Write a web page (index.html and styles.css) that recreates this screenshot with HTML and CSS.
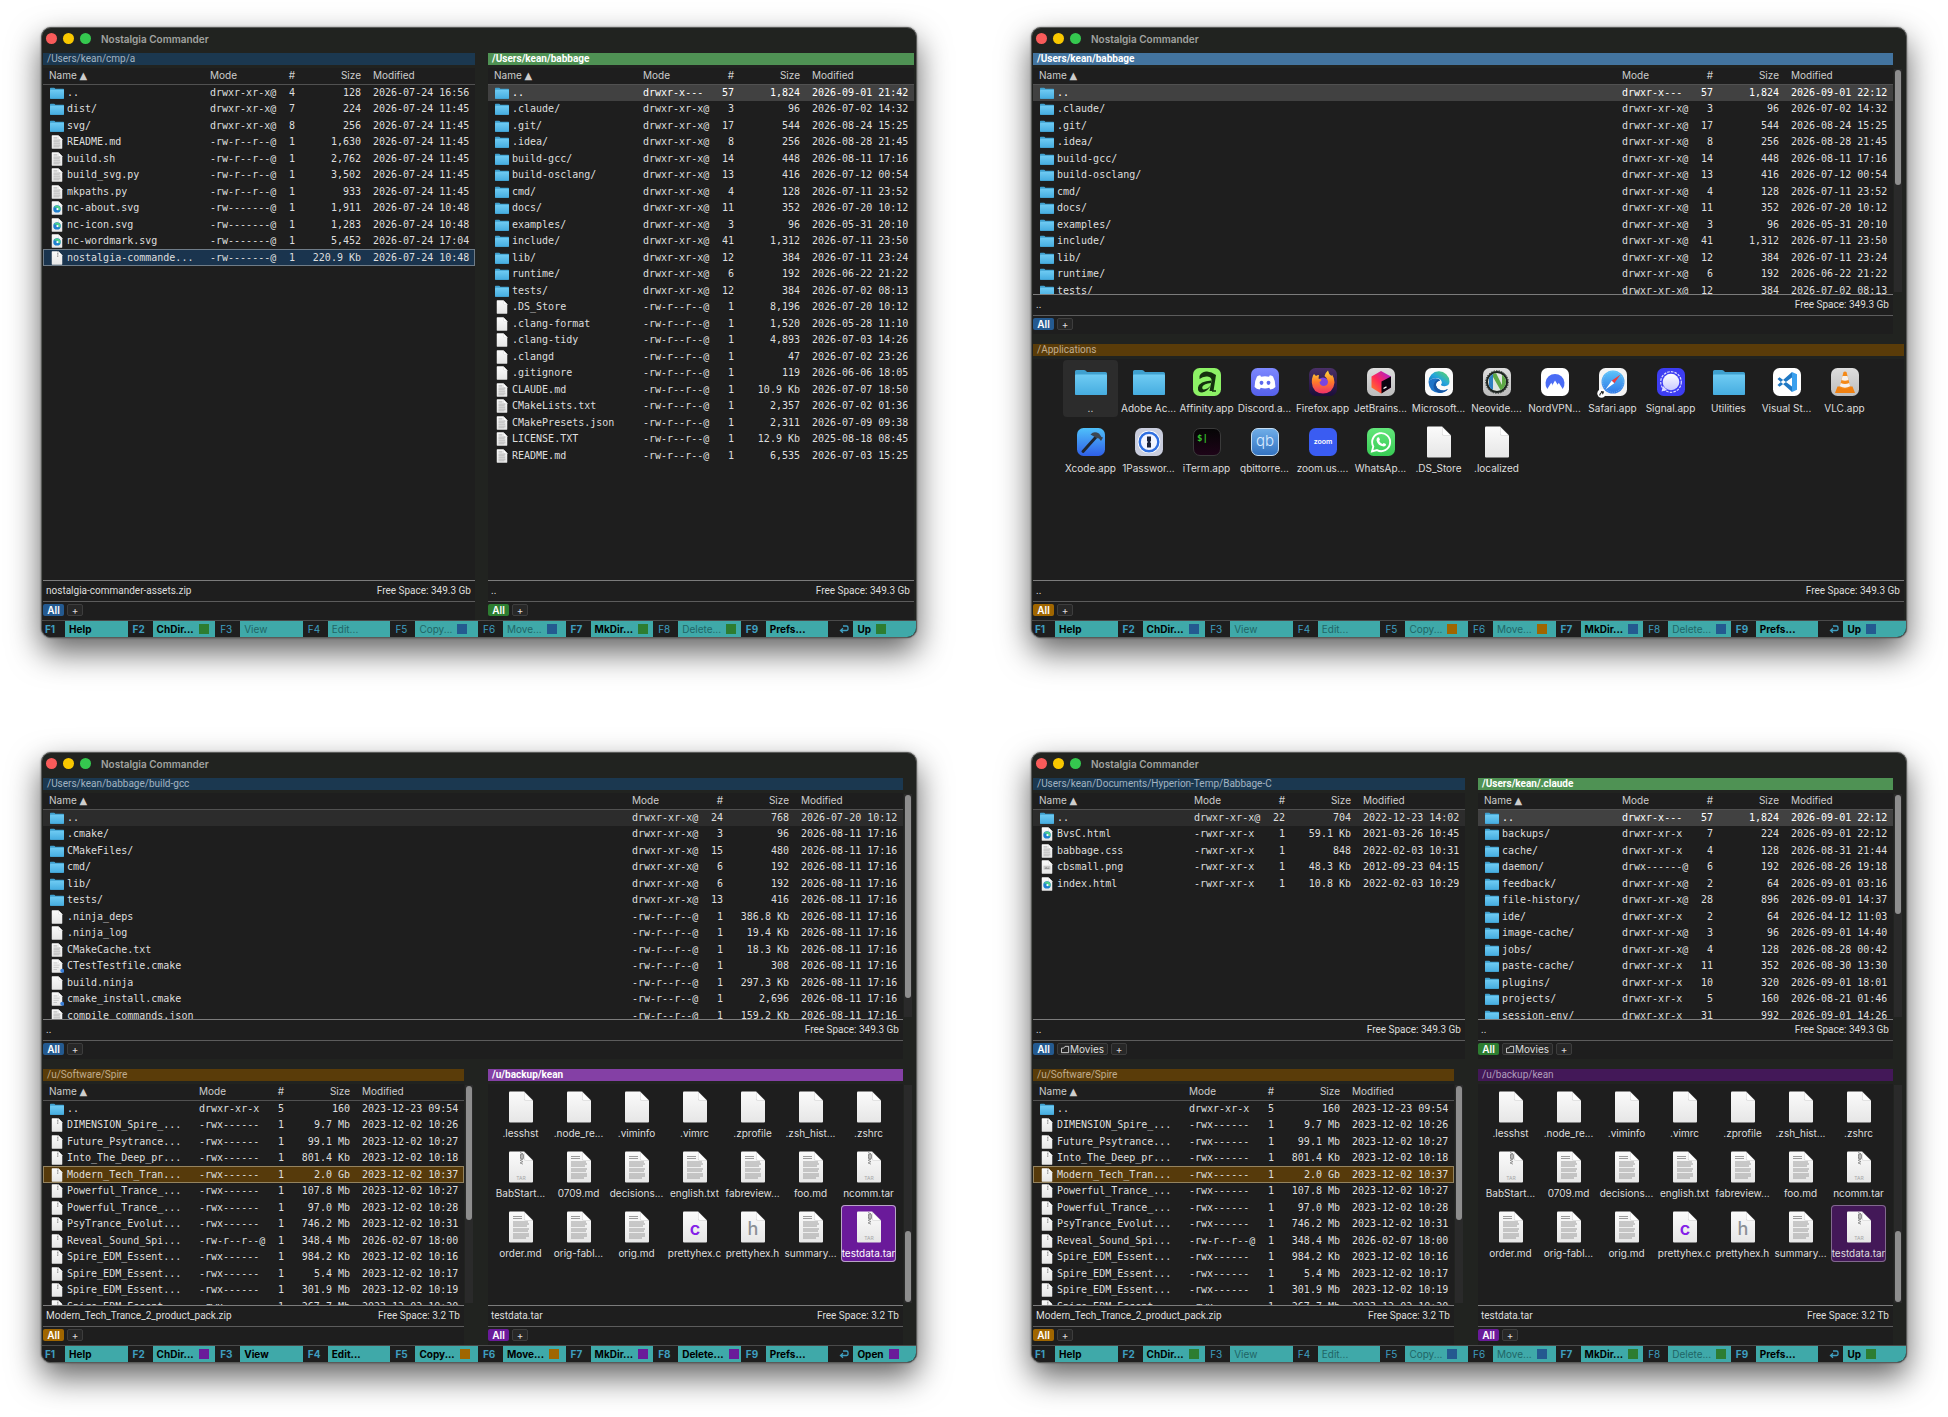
FILE: index.html
```html
<!DOCTYPE html>
<html lang="en">
<head>
<meta charset="utf-8">
<title>Nostalgia Commander</title>
<link rel="stylesheet" href="styles.css">
</head>
<body>
<svg class="sprite" width="0" height="0" aria-hidden="true">
<defs>
<linearGradient id="g-dir" x1="0" y1="0" x2="0" y2="1"><stop offset="0" stop-color="#6fcbf3"/><stop offset="1" stop-color="#46ade0"/></linearGradient>
<linearGradient id="g-doc" x1="0" y1="0" x2="0" y2="1"><stop offset="0" stop-color="#fbfbfb"/><stop offset="1" stop-color="#e6e6e6"/></linearGradient>
<linearGradient id="g-edge" x1="0" y1="1" x2="1" y2="0"><stop offset="0" stop-color="#1463b5"/><stop offset=".5" stop-color="#25a5dc"/><stop offset="1" stop-color="#5fdc55"/></linearGradient>
<linearGradient id="g-disc" x1="0" y1="0" x2="0" y2="1"><stop offset="0" stop-color="#7d88ff"/><stop offset="1" stop-color="#5560ea"/></linearGradient>
<linearGradient id="g-fire" x1="0" y1="0" x2="0" y2="1"><stop offset="0" stop-color="#ffd93a"/><stop offset=".5" stop-color="#ff7a2a"/><stop offset="1" stop-color="#f0306a"/></linearGradient>
<linearGradient id="g-firebg" x1="0" y1="0" x2="0" y2="1"><stop offset="0" stop-color="#4a3068"/><stop offset="1" stop-color="#1b0e3a"/></linearGradient>
<linearGradient id="g-jet" x1="0" y1="1" x2="1" y2="0"><stop offset="0" stop-color="#ff8a1f"/><stop offset=".45" stop-color="#ff2857"/><stop offset="1" stop-color="#a01ee0"/></linearGradient>
<linearGradient id="g-gray" x1="0" y1="0" x2="0" y2="1"><stop offset="0" stop-color="#dedede"/><stop offset="1" stop-color="#bcbcbc"/></linearGradient>
<linearGradient id="g-saf" x1="0" y1="0" x2="0" y2="1"><stop offset="0" stop-color="#5cc4fa"/><stop offset="1" stop-color="#2f78e6"/></linearGradient>
<linearGradient id="g-xc" x1="0" y1="0" x2="0" y2="1"><stop offset="0" stop-color="#4fc0fa"/><stop offset="1" stop-color="#2f5fe8"/></linearGradient>
<linearGradient id="g-qb" x1="0" y1="0" x2="0" y2="1"><stop offset="0" stop-color="#70aee8"/><stop offset="1" stop-color="#3272c0"/></linearGradient>
<linearGradient id="g-wa" x1="0" y1="0" x2="0" y2="1"><stop offset="0" stop-color="#62e67a"/><stop offset="1" stop-color="#38cc55"/></linearGradient>
<linearGradient id="g-term" x1="0" y1="0" x2="0" y2="1"><stop offset="0" stop-color="#050505"/><stop offset="1" stop-color="#1e0418"/></linearGradient>
<linearGradient id="g-sig" x1="0" y1="0" x2="0" y2="1"><stop offset="0" stop-color="#ffffff"/><stop offset="1" stop-color="#c8caff"/></linearGradient>
<clipPath id="c-neo"><circle cx="16" cy="16" r="9"/></clipPath>
</defs>
<symbol id="dir" viewBox="0 0 32 32"><path d="M0 5.5Q0 4 1.5 4H9q1 0 1.800.8L12 6H30.500Q32 6 32 7.500V27.500Q32 29 30.500 29H1.500Q0 29 0 27.500Z" fill="#3fa0cf"/><path d="M0 9.500Q0 8.500 1 8.500H31Q32 8.500 32 9.500V27.500Q32 29 30.500 29H1.500Q0 29 0 27.500Z" fill="url(#g-dir)"/></symbol>
<symbol id="doc" viewBox="0 0 32 32"><path d="M4 1.500Q4 .5 5 .5H19L28 9.500V30.500Q28 31.500 27 31.500H5Q4 31.500 4 30.500Z" fill="url(#g-doc)"/><path d="M19 .5 28 9.500H20.500Q19 9.500 19 8Z" fill="#cfcfcf"/><path d="M19.500 1.500 27 9H21Q19.500 9 19.500 7.500Z" fill="#fff"/></symbol>
<symbol id="txt" viewBox="0 0 32 32"><use href="#doc"/><path d="M8 5.500h9M8 7.500h9M8 11h15M8 13h16M8 15h14M8 18h16M8 20h15M8 23h16M8 25h16M8 27h13" stroke="#9c9c9c" stroke-width="1"/></symbol>
<symbol id="web" viewBox="0 0 32 32"><use href="#doc"/><circle cx="16" cy="18" r="8.500" fill="#1f7fd0"/><path d="M9 14a8.500 8.500 0 0 1 15.500 4q0 3-4 3-3 0-2-2 0-4-5-4-3 0-4.500-1Z" fill="#4fd08a"/><circle cx="17" cy="18.500" r="2.600" fill="#fff"/></symbol>
<symbol id="zip" viewBox="0 0 32 32"><use href="#doc"/><path d="M17.500 1v12" stroke="#8c8c8c" stroke-width="3" stroke-dasharray="2 1.500"/></symbol>
<symbol id="cmk" viewBox="0 0 32 32"><use href="#doc"/><path d="M8 9h9M8 14h14M8 19h12M8 24h8" stroke="#c4c4c4" stroke-width="2"/><circle cx="28" cy="27" r="4.500" fill="#3a7fd8"/></symbol>
<symbol id="png" viewBox="0 0 32 32"><use href="#doc"/><path d="M8 13h16v9H8Z" fill="#c8c8c8"/><path d="M10 20l4-4 3 3 2-2 3 3Z" fill="#8a8a8a"/></symbol>
<symbol id="tar" viewBox="0 0 32 32"><use href="#doc"/><path d="M15 1.500l3 1.300-3 1.300 3 1.300-3 1.300 3 1.300-3 1.300 3 1.300-3 1.300 3 1.300" fill="none" stroke="#8f8f8f" stroke-width=".9"/><rect x="15.500" y="3" width="3" height="5" rx="1" fill="#b5b5b5" stroke="#777" stroke-width=".7"/></symbol>
<symbol id="affinity" viewBox="0 0 32 32"><rect x="2" y="2" width="28" height="28" rx="6.500" fill="#8df266"/><path d="M8.500 10Q10 6 15 5.500T25 9L22.500 25H18.500L20.500 15Q21 11 16.500 10.500 12 10 8.500 13Z" fill="#14300f"/><path d="M20.500 14.500Q8.500 15 7 21.500 6.500 26.500 11 26.500 16.500 26 20 19Q17 23 13 23.500 10.500 23 11.500 20.500 13 17.500 20 17Z" fill="#14300f"/><path d="M21 25H25" stroke="#14300f" stroke-width="1.500"/></symbol>
<symbol id="discord" viewBox="0 0 32 32"><rect x="2" y="2" width="28" height="28" rx="6.500" fill="url(#g-disc)"/><path d="M11.200 9.300Q9 9.600 8 10.600 5.500 15 5.600 21 7.500 23.300 10.600 23.600L11.800 21.800Q16 23 20.200 21.800L21.400 23.600Q24.500 23.300 26.400 21 26.500 15 24 10.600 23 9.600 20.800 9.300L20 10.700Q16 10 12 10.700Z" fill="#fff"/><ellipse cx="12.500" cy="16.800" rx="1.900" ry="2.100" fill="#5c68ee"/><ellipse cx="19.500" cy="16.800" rx="1.900" ry="2.100" fill="#5c68ee"/></symbol>
<symbol id="firefox" viewBox="0 0 32 32"><rect x="2" y="2" width="28" height="28" rx="6.500" fill="url(#g-firebg)"/><circle cx="16" cy="17" r="5.500" fill="#7a45e0"/><path d="M6 9.500Q6.500 8.500 7 8L9 10Q10 9 12 9L11.500 12.500 14.500 13.500Q14.500 15 12.500 16 13 20 17 20 21 19.500 21 15.500 20.500 12 17.500 10 18.500 6.500 21 4.500 21.500 8 24.500 10L25 8.500Q27.500 12 27.500 16.500 26.500 27 16 27.500 5.500 27 4.800 16.500 4.800 12 6 9.500Z" fill="url(#g-fire)"/></symbol>
<symbol id="jetbrains" viewBox="0 0 32 32"><rect x="2" y="2" width="28" height="28" rx="6.500" fill="url(#g-gray)"/><path d="M16 5 26 10.500V21.500L16 27.500 6.500 21.500V10.500Z" fill="url(#g-jet)"/><path d="M16.500 15.500 26 10.500V21.500L16.500 27.500Z" fill="#0c0410"/><path d="M18.500 22.500l3-1.600" stroke="#fff" stroke-width="1.400"/></symbol>
<symbol id="edge" viewBox="0 0 32 32"><rect x="2" y="2" width="28" height="28" rx="6.500" fill="#fafafa"/><path d="M5.500 16A10.500 10.500 0 0 1 26.500 15.500Q26.500 20 21.500 20.200 18 20.200 18 18.500 19 17.500 18.800 16 18 12.500 13.500 12 8 12 5.500 16Z" fill="url(#g-edge)"/><path d="M5.500 16Q8 12.200 12.500 12.300 16.500 12.600 17 14.500 12.500 15.500 13 19.500 14.500 24.500 21 24.500L25 23Q22 26.800 16 27 6 26 5.500 16Z" fill="#1e74c8"/><path d="M13 19.500Q14.500 24.500 21 24.500L25 23Q22 26.800 17 26.900 10.500 25.500 10.500 19.500 11 15.500 15 13.500 17 14 17 14.500 12.500 15.500 13 19.500Z" fill="#1556a4"/></symbol>
<symbol id="neovide" viewBox="0 0 32 32"><rect x="2" y="2" width="28" height="28" rx="6.500" fill="url(#g-gray)"/><circle cx="16" cy="16" r="10" fill="#dfe5e0" stroke="#1d2420" stroke-width="2"/><circle cx="16" cy="16" r="11.300" fill="none" stroke="#1d2420" stroke-dasharray="1.300 1.300"/><g clip-path="url(#c-neo)"><path d="M8 9.500 12 6V26L8 24Z" fill="#2f7fc0"/><path d="M12 6 15 7 21 19V7L25 9V25H20L12 11Z" fill="#5da845"/></g></symbol>
<symbol id="nord" viewBox="0 0 32 32"><rect x="2" y="2" width="28" height="28" rx="6.500" fill="#fff"/><path d="M8.300 23A9.500 9.500 0 1 1 23.700 23L19.800 16.800 18.700 18.600 19 19.200 16 14.500 13 19.800 13.300 18.500 12.200 16.800Z" fill="#4a6cf5"/></symbol>
<symbol id="safari" viewBox="0 0 32 32"><rect x="2" y="2" width="28" height="28" rx="6.500" fill="#f4f4f4"/><circle cx="16" cy="16" r="11.500" fill="url(#g-saf)"/><circle cx="16" cy="16" r="10.300" fill="none" stroke="#a8d4fa" stroke-width="1" stroke-dasharray=".5 1.500"/><path d="M23.500 8.500 14.700 14.700 17.300 17.300Z" fill="#f03b3b"/><path d="M8.500 23.500 14.700 14.700 17.300 17.300Z" fill="#fff"/><circle cx="4.500" cy="27.500" r="4.200" fill="#fff"/><path d="M2.800 29.500Q2.800 26.500 6 26.200M4 25.500 6.400 26 5.500 28.300" fill="none" stroke="#222" stroke-width="1.100"/></symbol>
<symbol id="signal" viewBox="0 0 32 32"><rect x="2" y="2" width="28" height="28" rx="6.500" fill="#3d3df2"/><circle cx="16" cy="16" r="10.300" fill="none" stroke="#dcdcff" stroke-width="1.200" stroke-dasharray="2.600 1.100"/><circle cx="16" cy="16" r="8.300" fill="url(#g-sig)"/><path d="M6.500 25.500 8 20 12 24Z" fill="#dcdcff"/></symbol>
<symbol id="vscode" viewBox="0 0 32 32"><rect x="2" y="2" width="28" height="28" rx="6.500" fill="#fff"/><path d="M21 6 26 8.300V23.700L21 26Z" fill="#3aa0ee"/><path d="M21 6 6.500 19 8.500 20.800 21 11.500ZM21 26 6.500 13 8.500 11.200 21 20.500Z" fill="#1f78c4"/></symbol>
<symbol id="vlc" viewBox="0 0 32 32"><rect x="2" y="2" width="28" height="28" rx="6.500" fill="url(#g-gray)"/><path d="M8.500 20.500H23.500L26 27H6Z" fill="#f08010"/><path d="M14.500 6Q16 4.800 17.500 6L21.500 21.500Q16 24.500 10.500 21.500Z" fill="#f58a18"/><path d="M13.500 10H18.500L19.500 14Q16 15.500 12.500 14ZM11.700 17Q16 19 20.300 17L21.200 20.300Q16 23 10.800 20.300Z" fill="#f6f2ee"/></symbol>
<symbol id="xcode" viewBox="0 0 32 32"><rect x="2" y="2" width="28" height="28" rx="6.500" fill="url(#g-xc)"/><path d="M21 11 8 25.500" stroke="#1f2630" stroke-width="3" stroke-linecap="round"/><path d="M15.500 8.500Q19 4.500 24 7.500L26.500 11 28 11.500 26 15 24 12.500 21.500 12Z" fill="#3c4652"/></symbol>
<symbol id="onepw" viewBox="0 0 32 32"><rect x="2" y="2" width="28" height="28" rx="6.500" fill="#c9cddd"/><circle cx="16" cy="16" r="11.300" fill="#fff"/><circle cx="16" cy="16" r="9.300" fill="#f2f5ff" stroke="#2f6fe0" stroke-width="2.400"/><path d="M14 10.500H18V15L17 16 18 17V21.500H14V17L15 16 14 15Z" fill="#1a2238"/></symbol>
<symbol id="whatsapp" viewBox="0 0 32 32"><rect x="2" y="2" width="28" height="28" rx="6.500" fill="url(#g-wa)"/><path d="M7 25.500 8.300 20.500A9 9 0 1 1 12 24.100Z" fill="none" stroke="#fff" stroke-width="1.900"/><path d="M12.500 11.500 14 11.300 15 13.700 14.200 15Q15.500 17.300 17.600 18L18.700 16.900 21 18Q21 20.500 18.500 20.500 13 19.800 11.500 14.500 11.400 12.500 12.500 11.500Z" fill="#fff"/></symbol>
<symbol id="ret" viewBox="0 0 10 10"><path d="M4 2H7.500Q9 2 9 3.500V5Q9 6.500 7.500 6.500H2M4 4.300 1.500 6.500 4 8.700" fill="none" stroke="currentColor" stroke-width="1.300"/></symbol>
<symbol id="tabdir" viewBox="0 0 10 10"><path d="M.5 8.500V3.500H3L4.500 1.500H8.500V8.500Z" fill="none" stroke="currentColor"/></symbol>
</svg>

<main class="desk">

<section class="window" aria-label="Dual pane window">
<header class="titlebar"><button class="light close" aria-label="Close"></button><button class="light mini" aria-label="Minimize"></button><button class="light full" aria-label="Zoom"></button><h1>Nostalgia Commander</h1></header>
<div class="panes one-row">
<article class="pane blue">
<h2 class="path">/Users/kean/cmp/a</h2>
<div class="list"><table class="n1"><colgroup><col><col class="c-mode"><col class="c-links"><col class="c-size"><col class="c-date"></colgroup>
<thead><tr><th>Name <i>▲</i><th>Mode<th>#<th>Size<th>Modified</thead><tbody>
<tr><td><svg><use href="#dir"/></svg>..<td>drwxr-xr-x@<td>4<td>128<td>2026-07-24 16:56
<tr><td><svg><use href="#dir"/></svg>dist/<td>drwxr-xr-x@<td>7<td>224<td>2026-07-24 11:45
<tr><td><svg><use href="#dir"/></svg>svg/<td>drwxr-xr-x@<td>8<td>256<td>2026-07-24 11:45
<tr><td><svg><use href="#txt"/></svg>README.md<td>-rw-r--r--@<td>1<td>1,630<td>2026-07-24 11:45
<tr><td><svg><use href="#txt"/></svg>build.sh<td>-rw-r--r--@<td>1<td>2,762<td>2026-07-24 11:45
<tr><td><svg><use href="#txt"/></svg>build_svg.py<td>-rw-r--r--@<td>1<td>3,502<td>2026-07-24 11:45
<tr><td><svg><use href="#txt"/></svg>mkpaths.py<td>-rw-r--r--@<td>1<td>933<td>2026-07-24 11:45
<tr><td><svg><use href="#web"/></svg>nc-about.svg<td>-rw-------@<td>1<td>1,911<td>2026-07-24 10:48
<tr><td><svg><use href="#web"/></svg>nc-icon.svg<td>-rw-------@<td>1<td>1,283<td>2026-07-24 10:48
<tr><td><svg><use href="#web"/></svg>nc-wordmark.svg<td>-rw-------@<td>1<td>5,452<td>2026-07-24 17:04
<tr class="sel"><td><svg><use href="#zip"/></svg>nostalgia-commande...<td>-rw-------@<td>1<td>220.9 Kb<td>2026-07-24 10:48
</tbody></table></div>
<div class="status"><span>nostalgia-commander-assets.zip</span><span>Free Space: 349.3 Gb</span></div>
<nav class="tabs"><button class="on">All</button><button>+</button></nav>
</article>
<article class="pane green active">
<h2 class="path">/Users/kean/babbage</h2>
<div class="list"><table><colgroup><col><col class="c-mode"><col class="c-links"><col class="c-size"><col class="c-date"></colgroup>
<thead><tr><th>Name <i>▲</i><th>Mode<th>#<th>Size<th>Modified</thead><tbody>
<tr class="cur"><td><svg><use href="#dir"/></svg>..<td>drwxr-x---<td>57<td>1,824<td>2026-09-01 21:42
<tr><td><svg><use href="#dir"/></svg>.claude/<td>drwxr-xr-x@<td>3<td>96<td>2026-07-02 14:32
<tr><td><svg><use href="#dir"/></svg>.git/<td>drwxr-xr-x@<td>17<td>544<td>2026-08-24 15:25
<tr><td><svg><use href="#dir"/></svg>.idea/<td>drwxr-xr-x@<td>8<td>256<td>2026-08-28 21:45
<tr><td><svg><use href="#dir"/></svg>build-gcc/<td>drwxr-xr-x@<td>14<td>448<td>2026-08-11 17:16
<tr><td><svg><use href="#dir"/></svg>build-osclang/<td>drwxr-xr-x@<td>13<td>416<td>2026-07-12 00:54
<tr><td><svg><use href="#dir"/></svg>cmd/<td>drwxr-xr-x@<td>4<td>128<td>2026-07-11 23:52
<tr><td><svg><use href="#dir"/></svg>docs/<td>drwxr-xr-x@<td>11<td>352<td>2026-07-20 10:12
<tr><td><svg><use href="#dir"/></svg>examples/<td>drwxr-xr-x@<td>3<td>96<td>2026-05-31 20:10
<tr><td><svg><use href="#dir"/></svg>include/<td>drwxr-xr-x@<td>41<td>1,312<td>2026-07-11 23:50
<tr><td><svg><use href="#dir"/></svg>lib/<td>drwxr-xr-x@<td>12<td>384<td>2026-07-11 23:24
<tr><td><svg><use href="#dir"/></svg>runtime/<td>drwxr-xr-x@<td>6<td>192<td>2026-06-22 21:22
<tr><td><svg><use href="#dir"/></svg>tests/<td>drwxr-xr-x@<td>12<td>384<td>2026-07-02 08:13
<tr><td><svg><use href="#doc"/></svg>.DS_Store<td>-rw-r--r--@<td>1<td>8,196<td>2026-07-20 10:12
<tr><td><svg><use href="#doc"/></svg>.clang-format<td>-rw-r--r--@<td>1<td>1,520<td>2026-05-28 11:10
<tr><td><svg><use href="#doc"/></svg>.clang-tidy<td>-rw-r--r--@<td>1<td>4,893<td>2026-07-03 14:26
<tr><td><svg><use href="#doc"/></svg>.clangd<td>-rw-r--r--@<td>1<td>47<td>2026-07-02 23:26
<tr><td><svg><use href="#doc"/></svg>.gitignore<td>-rw-r--r--@<td>1<td>119<td>2026-06-06 18:05
<tr><td><svg><use href="#txt"/></svg>CLAUDE.md<td>-rw-r--r--@<td>1<td>10.9 Kb<td>2026-07-07 18:50
<tr><td><svg><use href="#txt"/></svg>CMakeLists.txt<td>-rw-r--r--@<td>1<td>2,357<td>2026-07-02 01:36
<tr><td><svg><use href="#txt"/></svg>CMakePresets.json<td>-rw-r--r--@<td>1<td>2,311<td>2026-07-09 09:38
<tr><td><svg><use href="#txt"/></svg>LICENSE.TXT<td>-rw-r--r--@<td>1<td>12.9 Kb<td>2025-08-18 08:45
<tr><td><svg><use href="#txt"/></svg>README.md<td>-rw-r--r--@<td>1<td>6,535<td>2026-07-03 15:25
</tbody></table></div>
<div class="status"><span>..</span><span>Free Space: 349.3 Gb</span></div>
<nav class="tabs"><button class="on">All</button><button>+</button></nav>
</article>
</div>
<footer class="keys">
<button><kbd>F1</kbd><span>Help</span></button><button><kbd>F2</kbd><span>ChDir...<i class="green"></i></span></button><button disabled><kbd>F3</kbd><span>View</span></button><button disabled><kbd>F4</kbd><span>Edit...</span></button><button disabled><kbd>F5</kbd><span>Copy...<i class="blue"></i></span></button><button disabled><kbd>F6</kbd><span>Move...<i class="blue"></i></span></button><button><kbd>F7</kbd><span>MkDir...<i class="green"></i></span></button><button disabled><kbd>F8</kbd><span>Delete...<i class="green"></i></span></button><button><kbd>F9</kbd><span>Prefs...</span></button><button><kbd><svg><use href="#ret"/></svg></kbd><span>Up<i class="green"></i></span></button>
</footer>
</section>

<section class="window" aria-label="Stacked pane window">
<header class="titlebar"><button class="light close" aria-label="Close"></button><button class="light mini" aria-label="Minimize"></button><button class="light full" aria-label="Zoom"></button><h1>Nostalgia Commander</h1></header>
<div class="panes two-rows">
<article class="pane blue active scrolls wide">
<h2 class="path">/Users/kean/babbage</h2>
<div class="list"><table><colgroup><col><col class="c-mode"><col class="c-links"><col class="c-size"><col class="c-date"></colgroup>
<thead><tr><th>Name <i>▲</i><th>Mode<th>#<th>Size<th>Modified</thead><tbody>
<tr class="cur"><td><svg><use href="#dir"/></svg>..<td>drwxr-x---<td>57<td>1,824<td>2026-09-01 22:12
<tr><td><svg><use href="#dir"/></svg>.claude/<td>drwxr-xr-x@<td>3<td>96<td>2026-07-02 14:32
<tr><td><svg><use href="#dir"/></svg>.git/<td>drwxr-xr-x@<td>17<td>544<td>2026-08-24 15:25
<tr><td><svg><use href="#dir"/></svg>.idea/<td>drwxr-xr-x@<td>8<td>256<td>2026-08-28 21:45
<tr><td><svg><use href="#dir"/></svg>build-gcc/<td>drwxr-xr-x@<td>14<td>448<td>2026-08-11 17:16
<tr><td><svg><use href="#dir"/></svg>build-osclang/<td>drwxr-xr-x@<td>13<td>416<td>2026-07-12 00:54
<tr><td><svg><use href="#dir"/></svg>cmd/<td>drwxr-xr-x@<td>4<td>128<td>2026-07-11 23:52
<tr><td><svg><use href="#dir"/></svg>docs/<td>drwxr-xr-x@<td>11<td>352<td>2026-07-20 10:12
<tr><td><svg><use href="#dir"/></svg>examples/<td>drwxr-xr-x@<td>3<td>96<td>2026-05-31 20:10
<tr><td><svg><use href="#dir"/></svg>include/<td>drwxr-xr-x@<td>41<td>1,312<td>2026-07-11 23:50
<tr><td><svg><use href="#dir"/></svg>lib/<td>drwxr-xr-x@<td>12<td>384<td>2026-07-11 23:24
<tr><td><svg><use href="#dir"/></svg>runtime/<td>drwxr-xr-x@<td>6<td>192<td>2026-06-22 21:22
<tr><td><svg><use href="#dir"/></svg>tests/<td>drwxr-xr-x@<td>12<td>384<td>2026-07-02 08:13
</tbody></table></div>
<div class="scroll"><div style="height:52%"></div></div>
<div class="status"><span>..</span><span>Free Space: 349.3 Gb</span></div>
<nav class="tabs"><button class="on">All</button><button>+</button></nav>
</article>
<article class="pane orange wide">
<h2 class="path">/Applications</h2>
<ul class="icons">
<li class="cur"><svg><use href="#dir"/></svg><span>..</span>
<li><svg><use href="#dir"/></svg><span>Adobe Ac...</span>
<li><svg><use href="#affinity"/></svg><span>Affinity.app</span>
<li><svg><use href="#discord"/></svg><span>Discord.a...</span>
<li><svg><use href="#firefox"/></svg><span>Firefox.app</span>
<li><svg><use href="#jetbrains"/></svg><span>JetBrains...</span>
<li><svg><use href="#edge"/></svg><span>Microsoft...</span>
<li><svg><use href="#neovide"/></svg><span>Neovide....</span>
<li><svg><use href="#nord"/></svg><span>NordVPN...</span>
<li><svg><use href="#safari"/></svg><span>Safari.app</span>
<li><svg><use href="#signal"/></svg><span>Signal.app</span>
<li><svg><use href="#dir"/></svg><span>Utilities</span>
<li><svg><use href="#vscode"/></svg><span>Visual St...</span>
<li><svg><use href="#vlc"/></svg><span>VLC.app</span>
<li><svg><use href="#xcode"/></svg><span>Xcode.app</span>
<li><svg><use href="#onepw"/></svg><span>1Passwor...</span>
<li><svg viewBox="0 0 32 32"><rect x="2.500" y="2.500" width="27" height="27" rx="6.500" fill="url(#g-term)" stroke="#3a3a3a"/><text x="6" y="15" class="t-term">$|</text></svg><span>iTerm.app</span>
<li><svg viewBox="0 0 32 32"><rect x="2.500" y="2.500" width="27" height="27" rx="6.500" fill="url(#g-qb)" stroke="#c4dcf2"/><text x="16" y="20" text-anchor="middle" class="t-qb">qb</text></svg><span>qbittorre...</span>
<li><svg viewBox="0 0 32 32"><rect x="2" y="2" width="28" height="28" rx="6.500" fill="#3a5cf2"/><text x="16" y="18" text-anchor="middle" class="t-zoom">zoom</text></svg><span>zoom.us....</span>
<li><svg><use href="#whatsapp"/></svg><span>WhatsAp...</span>
<li><svg><use href="#doc"/></svg><span>.DS_Store</span>
<li><svg><use href="#doc"/></svg><span>.localized</span>
</ul>
<div class="status"><span>..</span><span>Free Space: 349.3 Gb</span></div>
<nav class="tabs"><button class="on">All</button><button>+</button></nav>
</article>
</div>
<footer class="keys">
<button><kbd>F1</kbd><span>Help</span></button><button><kbd>F2</kbd><span>ChDir...<i class="blue"></i></span></button><button disabled><kbd>F3</kbd><span>View</span></button><button disabled><kbd>F4</kbd><span>Edit...</span></button><button disabled><kbd>F5</kbd><span>Copy...<i class="orange"></i></span></button><button disabled><kbd>F6</kbd><span>Move...<i class="orange"></i></span></button><button><kbd>F7</kbd><span>MkDir...<i class="blue"></i></span></button><button disabled><kbd>F8</kbd><span>Delete...<i class="blue"></i></span></button><button><kbd>F9</kbd><span>Prefs...</span></button><button><kbd><svg><use href="#ret"/></svg></kbd><span>Up<i class="blue"></i></span></button>
</footer>
</section>

<section class="window" aria-label="Three pane window">
<header class="titlebar"><button class="light close" aria-label="Close"></button><button class="light mini" aria-label="Minimize"></button><button class="light full" aria-label="Zoom"></button><h1>Nostalgia Commander</h1></header>
<div class="panes two-rows">
<article class="pane blue scrolls wide">
<h2 class="path">/Users/kean/babbage/build-gcc</h2>
<div class="list"><table><colgroup><col><col class="c-mode"><col class="c-links"><col class="c-size"><col class="c-date"></colgroup>
<thead><tr><th>Name <i>▲</i><th>Mode<th>#<th>Size<th>Modified</thead><tbody>
<tr class="cur"><td><svg><use href="#dir"/></svg>..<td>drwxr-xr-x@<td>24<td>768<td>2026-07-20 10:12
<tr><td><svg><use href="#dir"/></svg>.cmake/<td>drwxr-xr-x@<td>3<td>96<td>2026-08-11 17:16
<tr><td><svg><use href="#dir"/></svg>CMakeFiles/<td>drwxr-xr-x@<td>15<td>480<td>2026-08-11 17:16
<tr><td><svg><use href="#dir"/></svg>cmd/<td>drwxr-xr-x@<td>6<td>192<td>2026-08-11 17:16
<tr><td><svg><use href="#dir"/></svg>lib/<td>drwxr-xr-x@<td>6<td>192<td>2026-08-11 17:16
<tr><td><svg><use href="#dir"/></svg>tests/<td>drwxr-xr-x@<td>13<td>416<td>2026-08-11 17:16
<tr><td><svg><use href="#doc"/></svg>.ninja_deps<td>-rw-r--r--@<td>1<td>386.8 Kb<td>2026-08-11 17:16
<tr><td><svg><use href="#doc"/></svg>.ninja_log<td>-rw-r--r--@<td>1<td>19.4 Kb<td>2026-08-11 17:16
<tr><td><svg><use href="#txt"/></svg>CMakeCache.txt<td>-rw-r--r--@<td>1<td>18.3 Kb<td>2026-08-11 17:16
<tr><td><svg><use href="#cmk"/></svg>CTestTestfile.cmake<td>-rw-r--r--@<td>1<td>308<td>2026-08-11 17:16
<tr><td><svg><use href="#doc"/></svg>build.ninja<td>-rw-r--r--@<td>1<td>297.3 Kb<td>2026-08-11 17:16
<tr><td><svg><use href="#cmk"/></svg>cmake_install.cmake<td>-rw-r--r--@<td>1<td>2,696<td>2026-08-11 17:16
<tr><td><svg><use href="#txt"/></svg>compile_commands.json<td>-rw-r--r--@<td>1<td>159.2 Kb<td>2026-08-11 17:16
</tbody></table></div>
<div class="scroll"><div style="height:92%"></div></div>
<div class="status"><span>..</span><span>Free Space: 349.3 Gb</span></div>
<nav class="tabs"><button class="on">All</button><button>+</button></nav>
</article>
<article class="pane orange scrolls">
<h2 class="path">/u/Software/Spire</h2>
<div class="list"><table class="n1"><colgroup><col><col class="c-mode"><col class="c-links"><col class="c-size"><col class="c-date"></colgroup>
<thead><tr><th>Name <i>▲</i><th>Mode<th>#<th>Size<th>Modified</thead><tbody>
<tr><td><svg><use href="#dir"/></svg>..<td>drwxr-xr-x<td>5<td>160<td>2023-12-23 09:54
<tr><td><svg><use href="#zip"/></svg>DIMENSION_Spire_...<td>-rwx------<td>1<td>9.7 Mb<td>2023-12-02 10:26
<tr><td><svg><use href="#zip"/></svg>Future_Psytrance...<td>-rwx------<td>1<td>99.1 Mb<td>2023-12-02 10:27
<tr><td><svg><use href="#zip"/></svg>Into_The_Deep_pr...<td>-rwx------<td>1<td>801.4 Kb<td>2023-12-02 10:18
<tr class="sel"><td><svg><use href="#zip"/></svg>Modern_Tech_Tran...<td>-rwx------<td>1<td>2.0 Gb<td>2023-12-02 10:37
<tr><td><svg><use href="#zip"/></svg>Powerful_Trance_...<td>-rwx------<td>1<td>107.8 Mb<td>2023-12-02 10:27
<tr><td><svg><use href="#zip"/></svg>Powerful_Trance_...<td>-rwx------<td>1<td>97.0 Mb<td>2023-12-02 10:28
<tr><td><svg><use href="#zip"/></svg>PsyTrance_Evolut...<td>-rwx------<td>1<td>746.2 Mb<td>2023-12-02 10:31
<tr><td><svg><use href="#zip"/></svg>Reveal_Sound_Spi...<td>-rw-r--r--@<td>1<td>348.4 Mb<td>2026-02-07 18:00
<tr><td><svg><use href="#zip"/></svg>Spire_EDM_Essent...<td>-rwx------<td>1<td>984.2 Kb<td>2023-12-02 10:16
<tr><td><svg><use href="#zip"/></svg>Spire_EDM_Essent...<td>-rwx------<td>1<td>5.4 Mb<td>2023-12-02 10:17
<tr><td><svg><use href="#zip"/></svg>Spire_EDM_Essent...<td>-rwx------<td>1<td>301.9 Mb<td>2023-12-02 10:19
<tr><td><svg><use href="#zip"/></svg>Spire_EDM_Essent...<td>-rwx------<td>1<td>267.7 Mb<td>2023-12-02 10:20
</tbody></table></div>
<div class="scroll"><div style="height:62%"></div></div>
<div class="status"><span>Modern_Tech_Trance_2_product_pack.zip</span><span>Free Space: 3.2 Tb</span></div>
<nav class="tabs"><button class="on">All</button><button>+</button></nav>
</article>
<article class="pane purple active scrolls">
<h2 class="path">/u/backup/kean</h2>
<ul class="icons">
<li><svg><use href="#doc"/></svg><span>.lesshst</span>
<li><svg><use href="#doc"/></svg><span>.node_re...</span>
<li><svg><use href="#doc"/></svg><span>.viminfo</span>
<li><svg><use href="#doc"/></svg><span>.vimrc</span>
<li><svg><use href="#doc"/></svg><span>.zprofile</span>
<li><svg><use href="#doc"/></svg><span>.zsh_hist...</span>
<li><svg><use href="#doc"/></svg><span>.zshrc</span>
<li><svg viewBox="0 0 32 32"><use href="#tar"/><text x="16" y="29" text-anchor="middle" class="t-tar">TAR</text></svg><span>BabStart...</span>
<li><svg><use href="#txt"/></svg><span>0709.md</span>
<li><svg><use href="#txt"/></svg><span>decisions...</span>
<li><svg><use href="#txt"/></svg><span>english.txt</span>
<li><svg><use href="#txt"/></svg><span>fabreview...</span>
<li><svg><use href="#txt"/></svg><span>foo.md</span>
<li><svg viewBox="0 0 32 32"><use href="#tar"/><text x="16" y="29" text-anchor="middle" class="t-tar">TAR</text></svg><span>ncomm.tar</span>
<li><svg><use href="#txt"/></svg><span>order.md</span>
<li><svg><use href="#txt"/></svg><span>orig-fabl...</span>
<li><svg><use href="#txt"/></svg><span>orig.md</span>
<li><svg viewBox="0 0 32 32"><use href="#doc"/><text x="16" y="24" text-anchor="middle" class="t-c">c</text></svg><span>prettyhex.c</span>
<li><svg viewBox="0 0 32 32"><use href="#doc"/><text x="16" y="24" text-anchor="middle" class="t-h">h</text></svg><span>prettyhex.h</span>
<li><svg><use href="#txt"/></svg><span>summary...</span>
<li class="sel"><svg viewBox="0 0 32 32"><use href="#tar"/><text x="16" y="29" text-anchor="middle" class="t-tar">TAR</text></svg><span>testdata.tar</span>
</ul>
<div class="scroll end"><div style="height:33%"></div></div>
<div class="status"><span>testdata.tar</span><span>Free Space: 3.2 Tb</span></div>
<nav class="tabs"><button class="on">All</button><button>+</button></nav>
</article>
</div>
<footer class="keys">
<button><kbd>F1</kbd><span>Help</span></button><button><kbd>F2</kbd><span>ChDir...<i class="purple"></i></span></button><button><kbd>F3</kbd><span>View</span></button><button><kbd>F4</kbd><span>Edit...</span></button><button><kbd>F5</kbd><span>Copy...<i class="orange"></i></span></button><button><kbd>F6</kbd><span>Move...<i class="orange"></i></span></button><button><kbd>F7</kbd><span>MkDir...<i class="purple"></i></span></button><button><kbd>F8</kbd><span>Delete...<i class="purple"></i></span></button><button><kbd>F9</kbd><span>Prefs...</span></button><button><kbd><svg><use href="#ret"/></svg></kbd><span>Open<i class="purple"></i></span></button>
</footer>
</section>

<section class="window" aria-label="Four pane window">
<header class="titlebar"><button class="light close" aria-label="Close"></button><button class="light mini" aria-label="Minimize"></button><button class="light full" aria-label="Zoom"></button><h1>Nostalgia Commander</h1></header>
<div class="panes two-rows">
<article class="pane blue">
<h2 class="path">/Users/kean/Documents/Hyperion-Temp/Babbage-C</h2>
<div class="list"><table><colgroup><col><col class="c-mode"><col class="c-links"><col class="c-size"><col class="c-date"></colgroup>
<thead><tr><th>Name <i>▲</i><th>Mode<th>#<th>Size<th>Modified</thead><tbody>
<tr class="cur"><td><svg><use href="#dir"/></svg>..<td>drwxr-xr-x@<td>22<td>704<td>2022-12-23 14:02
<tr><td><svg><use href="#web"/></svg>BvsC.html<td>-rwxr-xr-x<td>1<td>59.1 Kb<td>2021-03-26 10:45
<tr><td><svg><use href="#txt"/></svg>babbage.css<td>-rwxr-xr-x<td>1<td>848<td>2022-02-03 10:31
<tr><td><svg><use href="#png"/></svg>cbsmall.png<td>-rwxr-xr-x<td>1<td>48.3 Kb<td>2012-09-23 04:15
<tr><td><svg><use href="#web"/></svg>index.html<td>-rwxr-xr-x<td>1<td>10.8 Kb<td>2022-02-03 10:29
</tbody></table></div>
<div class="status"><span>..</span><span>Free Space: 349.3 Gb</span></div>
<nav class="tabs"><button class="on">All</button><button><svg><use href="#tabdir"/></svg>Movies</button><button>+</button></nav>
</article>
<article class="pane green active scrolls">
<h2 class="path">/Users/kean/.claude</h2>
<div class="list"><table><colgroup><col><col class="c-mode"><col class="c-links"><col class="c-size"><col class="c-date"></colgroup>
<thead><tr><th>Name <i>▲</i><th>Mode<th>#<th>Size<th>Modified</thead><tbody>
<tr class="cur"><td><svg><use href="#dir"/></svg>..<td>drwxr-x---<td>57<td>1,824<td>2026-09-01 22:12
<tr><td><svg><use href="#dir"/></svg>backups/<td>drwxr-xr-x<td>7<td>224<td>2026-09-01 22:12
<tr><td><svg><use href="#dir"/></svg>cache/<td>drwxr-xr-x<td>4<td>128<td>2026-08-31 21:44
<tr><td><svg><use href="#dir"/></svg>daemon/<td>drwx------@<td>6<td>192<td>2026-08-26 19:18
<tr><td><svg><use href="#dir"/></svg>feedback/<td>drwxr-xr-x@<td>2<td>64<td>2026-09-01 03:16
<tr><td><svg><use href="#dir"/></svg>file-history/<td>drwxr-xr-x@<td>28<td>896<td>2026-09-01 14:37
<tr><td><svg><use href="#dir"/></svg>ide/<td>drwxr-xr-x<td>2<td>64<td>2026-04-12 11:03
<tr><td><svg><use href="#dir"/></svg>image-cache/<td>drwxr-xr-x@<td>3<td>96<td>2026-09-01 14:40
<tr><td><svg><use href="#dir"/></svg>jobs/<td>drwxr-xr-x@<td>4<td>128<td>2026-08-28 00:42
<tr><td><svg><use href="#dir"/></svg>paste-cache/<td>drwxr-xr-x<td>11<td>352<td>2026-08-30 13:30
<tr><td><svg><use href="#dir"/></svg>plugins/<td>drwxr-xr-x<td>10<td>320<td>2026-09-01 18:01
<tr><td><svg><use href="#dir"/></svg>projects/<td>drwxr-xr-x<td>5<td>160<td>2026-08-21 01:46
<tr><td><svg><use href="#dir"/></svg>session-env/<td>drwxr-xr-x<td>31<td>992<td>2026-09-01 14:26
</tbody></table></div>
<div class="scroll"><div style="height:54%"></div></div>
<div class="status"><span>..</span><span>Free Space: 349.3 Gb</span></div>
<nav class="tabs"><button class="on">All</button><button><svg><use href="#tabdir"/></svg>Movies</button><button>+</button></nav>
</article>
<article class="pane orange scrolls">
<h2 class="path">/u/Software/Spire</h2>
<div class="list"><table class="n1"><colgroup><col><col class="c-mode"><col class="c-links"><col class="c-size"><col class="c-date"></colgroup>
<thead><tr><th>Name <i>▲</i><th>Mode<th>#<th>Size<th>Modified</thead><tbody>
<tr><td><svg><use href="#dir"/></svg>..<td>drwxr-xr-x<td>5<td>160<td>2023-12-23 09:54
<tr><td><svg><use href="#zip"/></svg>DIMENSION_Spire_...<td>-rwx------<td>1<td>9.7 Mb<td>2023-12-02 10:26
<tr><td><svg><use href="#zip"/></svg>Future_Psytrance...<td>-rwx------<td>1<td>99.1 Mb<td>2023-12-02 10:27
<tr><td><svg><use href="#zip"/></svg>Into_The_Deep_pr...<td>-rwx------<td>1<td>801.4 Kb<td>2023-12-02 10:18
<tr class="sel"><td><svg><use href="#zip"/></svg>Modern_Tech_Tran...<td>-rwx------<td>1<td>2.0 Gb<td>2023-12-02 10:37
<tr><td><svg><use href="#zip"/></svg>Powerful_Trance_...<td>-rwx------<td>1<td>107.8 Mb<td>2023-12-02 10:27
<tr><td><svg><use href="#zip"/></svg>Powerful_Trance_...<td>-rwx------<td>1<td>97.0 Mb<td>2023-12-02 10:28
<tr><td><svg><use href="#zip"/></svg>PsyTrance_Evolut...<td>-rwx------<td>1<td>746.2 Mb<td>2023-12-02 10:31
<tr><td><svg><use href="#zip"/></svg>Reveal_Sound_Spi...<td>-rw-r--r--@<td>1<td>348.4 Mb<td>2026-02-07 18:00
<tr><td><svg><use href="#zip"/></svg>Spire_EDM_Essent...<td>-rwx------<td>1<td>984.2 Kb<td>2023-12-02 10:16
<tr><td><svg><use href="#zip"/></svg>Spire_EDM_Essent...<td>-rwx------<td>1<td>5.4 Mb<td>2023-12-02 10:17
<tr><td><svg><use href="#zip"/></svg>Spire_EDM_Essent...<td>-rwx------<td>1<td>301.9 Mb<td>2023-12-02 10:19
<tr><td><svg><use href="#zip"/></svg>Spire_EDM_Essent...<td>-rwx------<td>1<td>267.7 Mb<td>2023-12-02 10:20
</tbody></table></div>
<div class="scroll"><div style="height:62%"></div></div>
<div class="status"><span>Modern_Tech_Trance_2_product_pack.zip</span><span>Free Space: 3.2 Tb</span></div>
<nav class="tabs"><button class="on">All</button><button>+</button></nav>
</article>
<article class="pane purple scrolls">
<h2 class="path">/u/backup/kean</h2>
<ul class="icons">
<li><svg><use href="#doc"/></svg><span>.lesshst</span>
<li><svg><use href="#doc"/></svg><span>.node_re...</span>
<li><svg><use href="#doc"/></svg><span>.viminfo</span>
<li><svg><use href="#doc"/></svg><span>.vimrc</span>
<li><svg><use href="#doc"/></svg><span>.zprofile</span>
<li><svg><use href="#doc"/></svg><span>.zsh_hist...</span>
<li><svg><use href="#doc"/></svg><span>.zshrc</span>
<li><svg viewBox="0 0 32 32"><use href="#tar"/><text x="16" y="29" text-anchor="middle" class="t-tar">TAR</text></svg><span>BabStart...</span>
<li><svg><use href="#txt"/></svg><span>0709.md</span>
<li><svg><use href="#txt"/></svg><span>decisions...</span>
<li><svg><use href="#txt"/></svg><span>english.txt</span>
<li><svg><use href="#txt"/></svg><span>fabreview...</span>
<li><svg><use href="#txt"/></svg><span>foo.md</span>
<li><svg viewBox="0 0 32 32"><use href="#tar"/><text x="16" y="29" text-anchor="middle" class="t-tar">TAR</text></svg><span>ncomm.tar</span>
<li><svg><use href="#txt"/></svg><span>order.md</span>
<li><svg><use href="#txt"/></svg><span>orig-fabl...</span>
<li><svg><use href="#txt"/></svg><span>orig.md</span>
<li><svg viewBox="0 0 32 32"><use href="#doc"/><text x="16" y="24" text-anchor="middle" class="t-c">c</text></svg><span>prettyhex.c</span>
<li><svg viewBox="0 0 32 32"><use href="#doc"/><text x="16" y="24" text-anchor="middle" class="t-h">h</text></svg><span>prettyhex.h</span>
<li><svg><use href="#txt"/></svg><span>summary...</span>
<li class="sel"><svg viewBox="0 0 32 32"><use href="#tar"/><text x="16" y="29" text-anchor="middle" class="t-tar">TAR</text></svg><span>testdata.tar</span>
</ul>
<div class="scroll end"><div style="height:33%"></div></div>
<div class="status"><span>testdata.tar</span><span>Free Space: 3.2 Tb</span></div>
<nav class="tabs"><button class="on">All</button><button>+</button></nav>
</article>
</div>
<footer class="keys">
<button><kbd>F1</kbd><span>Help</span></button><button><kbd>F2</kbd><span>ChDir...<i class="green"></i></span></button><button disabled><kbd>F3</kbd><span>View</span></button><button disabled><kbd>F4</kbd><span>Edit...</span></button><button disabled><kbd>F5</kbd><span>Copy...<i class="blue"></i></span></button><button disabled><kbd>F6</kbd><span>Move...<i class="blue"></i></span></button><button><kbd>F7</kbd><span>MkDir...<i class="green"></i></span></button><button disabled><kbd>F8</kbd><span>Delete...<i class="green"></i></span></button><button><kbd>F9</kbd><span>Prefs...</span></button><button><kbd><svg><use href="#ret"/></svg></kbd><span>Up<i class="green"></i></span></button>
</footer>
</section>

</main>
</body>
</html>
```
FILE: styles.css
```css
* { box-sizing: border-box; }

body {
  margin: 0;
  background: #fff;
  font: 10px/12px Inter, "Noto Sans", sans-serif;
  color: #dedede;
}

h1, h2, ul { margin: 0; padding: 0; font-size: 10px; }
i { font-style: normal; }
button { margin: 0; padding: 0; border: 0; background: none; font: inherit; color: inherit; }
.sprite { position: absolute; }

/* Pane colours: strong, active bar, inactive bar, bar text, selected row */
.blue   { --tone: #245a90; --bar-on: #43749f; --bar: #1b3850; --bar-text: #a3b3c0; --row: #1a344e; --edge: #6f7c88; }
.green  { --tone: #2d7d31; --bar-on: #4f9254; --bar: #1c4a20; --bar-text: #a3c0a5; --row: #1c4a20; --edge: #6f886f; }
.orange { --tone: #a06600; --bar-on: #b07a20; --bar: #5a3c09; --bar-text: #c0ad90; --row: #563a0b; --edge: #94835f; }
.purple { --tone: #6a1a9a; --bar-on: #8440a5; --bar: #431858; --bar-text: #b09cbb; --row: #431858; --edge: #82698e; }

.desk {
  display: grid;
  grid-template: repeat(2, minmax(0, 1fr)) / repeat(2, minmax(0, 1fr));
  gap: 114px;
  height: 100vh;
  min-height: 900px;
  padding: 27px 41px 54px;
}

.window {
  display: flex;
  flex-direction: column;
  overflow: hidden;
  border: 1px solid #5a5b59;
  border-radius: 10px;
  background: #212320;
  box-shadow: 0 14px 32px rgba(0, 0, 0, .62), 0 0 2px rgba(0, 0, 0, .5);
}

.titlebar { display: flex; align-items: center; gap: 6px; height: 25px; padding: 0 4px 4px; }
.titlebar h1 { margin-left: 4px; font-weight: 600; color: #a2a3a1; }
.light { width: 11px; height: 11px; border-radius: 50%; }
.close { background: #f95b5a; }
.mini { background: #f9c800; }
.full { background: #35c84f; }

.panes { flex: 1; display: grid; grid-template-columns: 432fr 426fr; gap: 10px 13px; min-height: 0; padding: 0 2px 0 1px; }
.one-row { grid-template-rows: minmax(0, 1fr); }
.two-rows { grid-template-rows: minmax(0, 281fr) minmax(0, 276fr); }
.wide { grid-column: 1 / -1; }

.pane { display: grid; grid-template: 15px minmax(0, 1fr) 22px 18px / minmax(0, 1fr); min-width: 0; }
.scrolls { grid-template-columns: minmax(0, 1fr) 11px; }
.pane > * { grid-column: 1; }

.path, .status { font-family: Roboto, sans-serif; }
.path { height: 12px; padding: 0 4px; background: var(--bar); color: var(--bar-text); font-weight: 400; }
.active .path { background: var(--bar-on); color: #fff; font-weight: 700; }

.list, .icons { grid-row: 2; overflow: hidden; background: #1e1e1e; }

table { width: 100%; table-layout: fixed; border-collapse: collapse; font: 10px/14px "DejaVu Sans Mono", monospace; }
.c-mode { width: 77px; }
.c-links { width: 14px; }
.n1 .c-links { width: 8px; }
.c-size { width: 66px; }
.c-date { width: 114px; }
th, td { padding: 0; text-align: left; white-space: nowrap; }
th { height: 16px; border-bottom: 1px solid #515151; font: 10px/15px Inter, sans-serif; color: #cdcdcd; }
th i { font-family: "DejaVu Sans", sans-serif; }
th:first-child { padding-left: 6px; }
td:first-child { padding-left: 7px; }
th:nth-child(3), td:nth-child(3), th:nth-child(4), td:nth-child(4) { text-align: right; }
th:last-child, td:last-child { padding-left: 12px; }
tbody tr { height: 16px; }
tbody tr:nth-child(odd) { height: 17px; }
td svg { width: 14px; height: 14px; margin-right: 3px; vertical-align: top; }
.cur { background: #2c2c2c; }
.active .cur { background: #414141; color: #fff; }
tr.sel { background: var(--row); outline: 1px solid var(--edge); outline-offset: -1px; }

.icons {
  display: grid;
  grid-template-columns: repeat(auto-fill, 55px);
  justify-content: center;
  align-content: start;
  gap: 3px;
  padding: 1px 5px 1px 3px;
  list-style: none;
}
.icons li { display: flex; flex-direction: column; align-items: center; height: 57px; padding-top: 6px; border-radius: 4px; line-height: 14px; white-space: nowrap; }
.icons svg { flex: none; width: 32px; height: 32px; margin-bottom: 3px; overflow: visible; }
.icons .sel { background: var(--row); box-shadow: inset 0 0 0 1px var(--edge); }
.active .icons .sel { background: var(--tone); box-shadow: inset 0 0 0 1px #b9a3c6; color: #fff; }

.t-tar { font: 5px/5px Inter, sans-serif; fill: #a8a8a8; }
.t-c { font: 600 18px/18px Inter, sans-serif; fill: #8420e8; }
.t-h { font: 500 18px/18px Inter, sans-serif; fill: #8b9096; }
.t-term { font: 700 9px/9px "DejaVu Sans Mono", monospace; fill: #35c22c; }
.t-qb { font: 300 15px/15px Inter, sans-serif; fill: #d9eaff; }
.t-zoom { font: 600 7px/7px Inter, sans-serif; fill: #fff; }

.pane .scroll { grid-column: 2; grid-row: 2; display: flex; flex-direction: column; margin: 1px 2px 2px 1px; padding: 1px; background: #2a2a2a; }
.scroll div { border-radius: 3px; background: #8e8e8e; }
.scroll.end { justify-content: flex-end; }

.status { grid-row: 3; display: flex; justify-content: space-between; padding: 0 4px 0 3px; border-top: 1px solid #7c7c7c; border-bottom: 1px solid #5c5c5c; background: #1e1e1e; line-height: 19px; }

.tabs { grid-row: 4; display: flex; align-items: flex-start; gap: 3px; padding: 2px 0; background: #1e1e1e; }
.tabs button { display: flex; align-items: center; justify-content: center; min-width: 16px; height: 12px; padding: 0 3px; border: 1px solid #3d3d3d; border-radius: 2px; background: #272727; line-height: 10px; }
.tabs .on { min-width: 21px; padding: 0; border: 0; background: var(--tone); color: #fff; font-weight: 600; }
.tabs svg { width: 9px; height: 9px; }

.keys { display: grid; grid-template-columns: repeat(10, 1fr); height: 17px; margin: 0 -1px; border-top: 1px solid #4a4a4a; background: #1e1e1e; }
.keys button { display: flex; align-items: stretch; padding-right: 1px; font-weight: 700; line-height: 16px; text-align: left; }
.keys button:last-child { padding-right: 0; }
.keys kbd { width: 24px; padding-left: 4px; font: inherit; color: #3f9fc0; }
.keys kbd svg { display: block; width: 10px; height: 10px; margin: 3px 0 0 6px; }
.keys span { flex: 1; display: flex; align-items: center; gap: 5px; padding-left: 4px; background: #3fa9a9; color: #000; }
.keys i { width: 10px; height: 10px; background: var(--tone); }
.keys button:disabled { font-weight: 400; }
.keys button:disabled span { color: #1f6566; }
```
